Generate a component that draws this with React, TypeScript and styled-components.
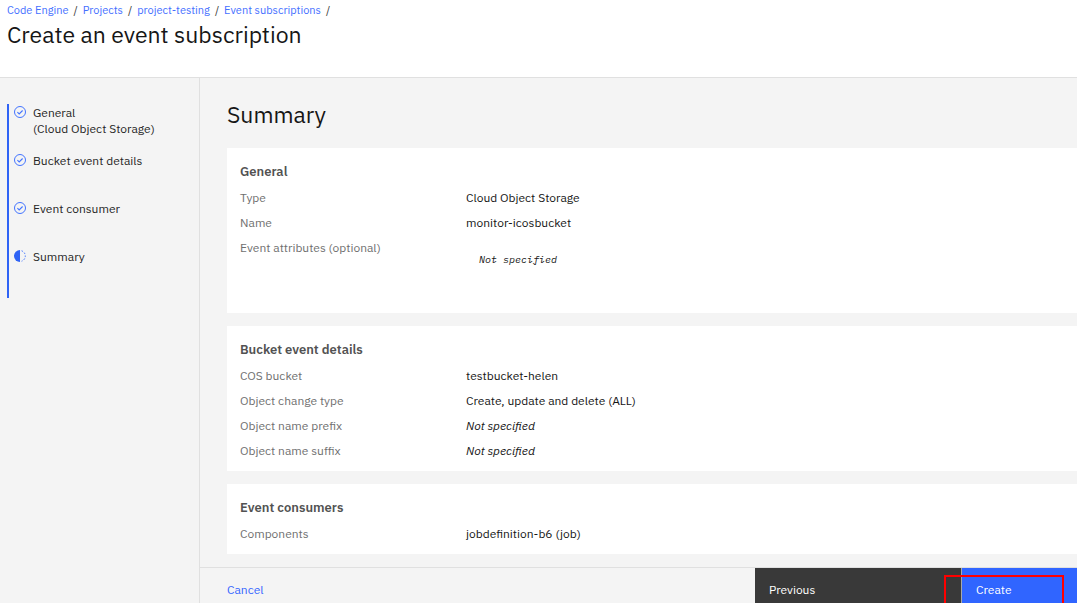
import React from "react";
import styled, { createGlobalStyle } from "styled-components";

const GlobalStyle = createGlobalStyle`
  *, *::before, *::after { box-sizing: border-box; }
  body {
    margin: 0;
    background: #f4f4f4;
    color: #161616;
    font-family: "IBM Plex Sans", Roboto, "Liberation Sans", sans-serif;
    font-size: 12px;
    line-height: 16px;
  }
`;

const Shell = styled.div`
  display: flex;
  flex-direction: column;
  height: 100vh;
  overflow: hidden;
`;

const Header = styled.header`
  flex: none;
  padding: 2px 7px 27px;
  background: #ffffff;
  border-bottom: 1px solid #e0e0e0;
`;

const Breadcrumb = styled.ol`
  display: flex;
  margin: 0;
  padding: 0;
  list-style: none;
  font-size: 11px;
`;

const Crumb = styled.li`
  &::after {
    content: "/";
    margin: 0 5px;
    color: #393939;
  }
`;

const Link = styled.a`
  color: #456fff;
  text-decoration: none;
`;

const PageTitle = styled.h1`
  margin: 0;
  font-size: 23px;
  font-weight: 400;
  line-height: 32px;
`;

const Body = styled.div`
  display: flex;
  flex: 1;
  min-height: 0;
`;

const Sidebar = styled.nav`
  flex: 0 0 200px;
  padding: 26px 7px 0;
  border-right: 1px solid #e0e0e0;
`;

const Steps = styled.ol`
  margin: 0;
  padding: 0;
  list-style: none;
  border-left: 2px solid #2f63f5;
`;

const Step = styled.li`
  display: flex;
  gap: 7px;
  min-height: 48px;
  padding-left: 5px;
  color: #262626;

  &:last-child {
    min-height: 50px;
  }
`;

const StepIcon = styled.svg`
  flex: none;
  width: 12px;
  height: 12px;
  margin-top: 2px;
`;

const StepText = styled.span`
  padding-top: 1px;
`;

const Content = styled.div`
  display: flex;
  flex: 1;
  flex-direction: column;
  min-width: 0;
`;

const Main = styled.main`
  flex: 1;
  min-height: 0;
  padding: 20px 0 0 27px;
`;

const SectionTitle = styled.h2`
  margin: 0 0 18px;
  font-size: 23px;
  font-weight: 400;
  line-height: 32px;
`;

const Cards = styled.div`
  display: grid;
  gap: 13px;
`;

const Card = styled.section`
  padding: 14px 13px 8px;
  background: #ffffff;
`;

const CardTitle = styled.h3`
  margin: 0 0 3px;
  color: #525252;
  font-size: 13px;
  font-weight: 600;
  line-height: 20px;
`;

const Details = styled.dl`
  margin: 0;
`;

const Row = styled.div`
  display: grid;
  grid-template-columns: 226px 1fr;
  line-height: 25px;
`;

const Term = styled.dt`
  color: #6f6f6f;
`;

const Value = styled.dd<{ $empty?: boolean }>`
  margin: 0;
  font-style: ${(p) => (p.$empty ? "italic" : "normal")};
`;

const Attributes = styled.pre`
  min-height: 44px;
  margin: 13px;
  font-family: "IBM Plex Mono", "Liberation Mono", monospace;
  font-size: 10px;
  font-style: italic;
  line-height: 24px;
`;

const Footer = styled.footer`
  display: grid;
  flex: none;
  grid-template-columns: 1fr 206px 116px;
  height: 36px;
  border-top: 1px solid #e0e0e0;
`;

const CancelButton = styled.button`
  justify-self: start;
  padding: 8px 27px 0;
  border: 0;
  background: none;
  color: #3566ff;
  font: inherit;
`;

const ActionButton = styled.button<{ $primary?: boolean }>`
  padding: 8px 14px 0;
  border: 0;
  border-left: ${(p) => (p.$primary ? "1px solid #a8a8a8" : "0")};
  background: ${(p) => (p.$primary ? "#3065ff" : "#393939")};
  color: #ffffff;
  font: inherit;
  text-align: left;
`;

const CreateArea = styled.div`
  position: relative;
  display: grid;
`;

const Highlight = styled.span`
  position: absolute;
  top: 7px;
  right: 13px;
  bottom: 0;
  left: -17px;
  border: 2px solid #ff0000;
  border-bottom: 0;
  pointer-events: none;
`;

const DoneIcon = () => (
  <StepIcon viewBox="0 0 12 12" fill="none" stroke="#4374ff" aria-hidden="true">
    <circle cx="6" cy="6" r="5.5" />
    <path d="M3.4 6.1 5.2 7.9 8.6 4.5" strokeWidth="1.1" />
  </StepIcon>
);

const CurrentIcon = () => (
  <StepIcon viewBox="0 0 12 12" fill="none" aria-hidden="true">
    <path d="M6 0A6 6 0 0 0 6 12Z" fill="#2f63f5" />
    <path
      d="M7.6.8A5.5 5.5 0 0 1 7.6 11.2"
      stroke="#4374ff"
      strokeDasharray="1.6 1.5"
    />
  </StepIcon>
);

const crumbs = ["Code Engine", "Projects", "project-testing", "Event subscriptions"];

export default function App() {
  return (
    <Shell>
      <GlobalStyle />
      <Header>
        <nav aria-label="Breadcrumb">
          <Breadcrumb>
            {crumbs.map((name) => (
              <Crumb key={name}>
                <Link href="#">{name}</Link>
              </Crumb>
            ))}
          </Breadcrumb>
        </nav>
        <PageTitle>Create an event subscription</PageTitle>
      </Header>
      <Body>
        <Sidebar aria-label="Progress">
          <Steps>
            <Step>
              <DoneIcon />
              <StepText>
                General
                <br />
                (Cloud Object Storage)
              </StepText>
            </Step>
            <Step>
              <DoneIcon />
              <StepText>Bucket event details</StepText>
            </Step>
            <Step>
              <DoneIcon />
              <StepText>Event consumer</StepText>
            </Step>
            <Step aria-current="step">
              <CurrentIcon />
              <StepText>Summary</StepText>
            </Step>
          </Steps>
        </Sidebar>
        <Content>
          <Main>
            <SectionTitle>Summary</SectionTitle>
            <Cards>
              <Card>
                <CardTitle>General</CardTitle>
                <Details>
                  <Row>
                    <Term>Type</Term>
                    <Value>Cloud Object Storage</Value>
                  </Row>
                  <Row>
                    <Term>Name</Term>
                    <Value>monitor-icosbucket</Value>
                  </Row>
                  <Row>
                    <Term>Event attributes (optional)</Term>
                    <Value>
                      <Attributes>Not specified</Attributes>
                    </Value>
                  </Row>
                </Details>
              </Card>
              <Card>
                <CardTitle>Bucket event details</CardTitle>
                <Details>
                  <Row>
                    <Term>COS bucket</Term>
                    <Value>testbucket-helen</Value>
                  </Row>
                  <Row>
                    <Term>Object change type</Term>
                    <Value>Create, update and delete (ALL)</Value>
                  </Row>
                  <Row>
                    <Term>Object name prefix</Term>
                    <Value $empty>Not specified</Value>
                  </Row>
                  <Row>
                    <Term>Object name suffix</Term>
                    <Value $empty>Not specified</Value>
                  </Row>
                </Details>
              </Card>
              <Card>
                <CardTitle>Event consumers</CardTitle>
                <Details>
                  <Row>
                    <Term>Components</Term>
                    <Value>jobdefinition-b6 (job)</Value>
                  </Row>
                </Details>
              </Card>
            </Cards>
          </Main>
          <Footer>
            <CancelButton type="button">Cancel</CancelButton>
            <ActionButton type="button">Previous</ActionButton>
            <CreateArea>
              <ActionButton type="button" $primary>
                Create
              </ActionButton>
              <Highlight />
            </CreateArea>
          </Footer>
        </Content>
      </Body>
    </Shell>
  );
}
